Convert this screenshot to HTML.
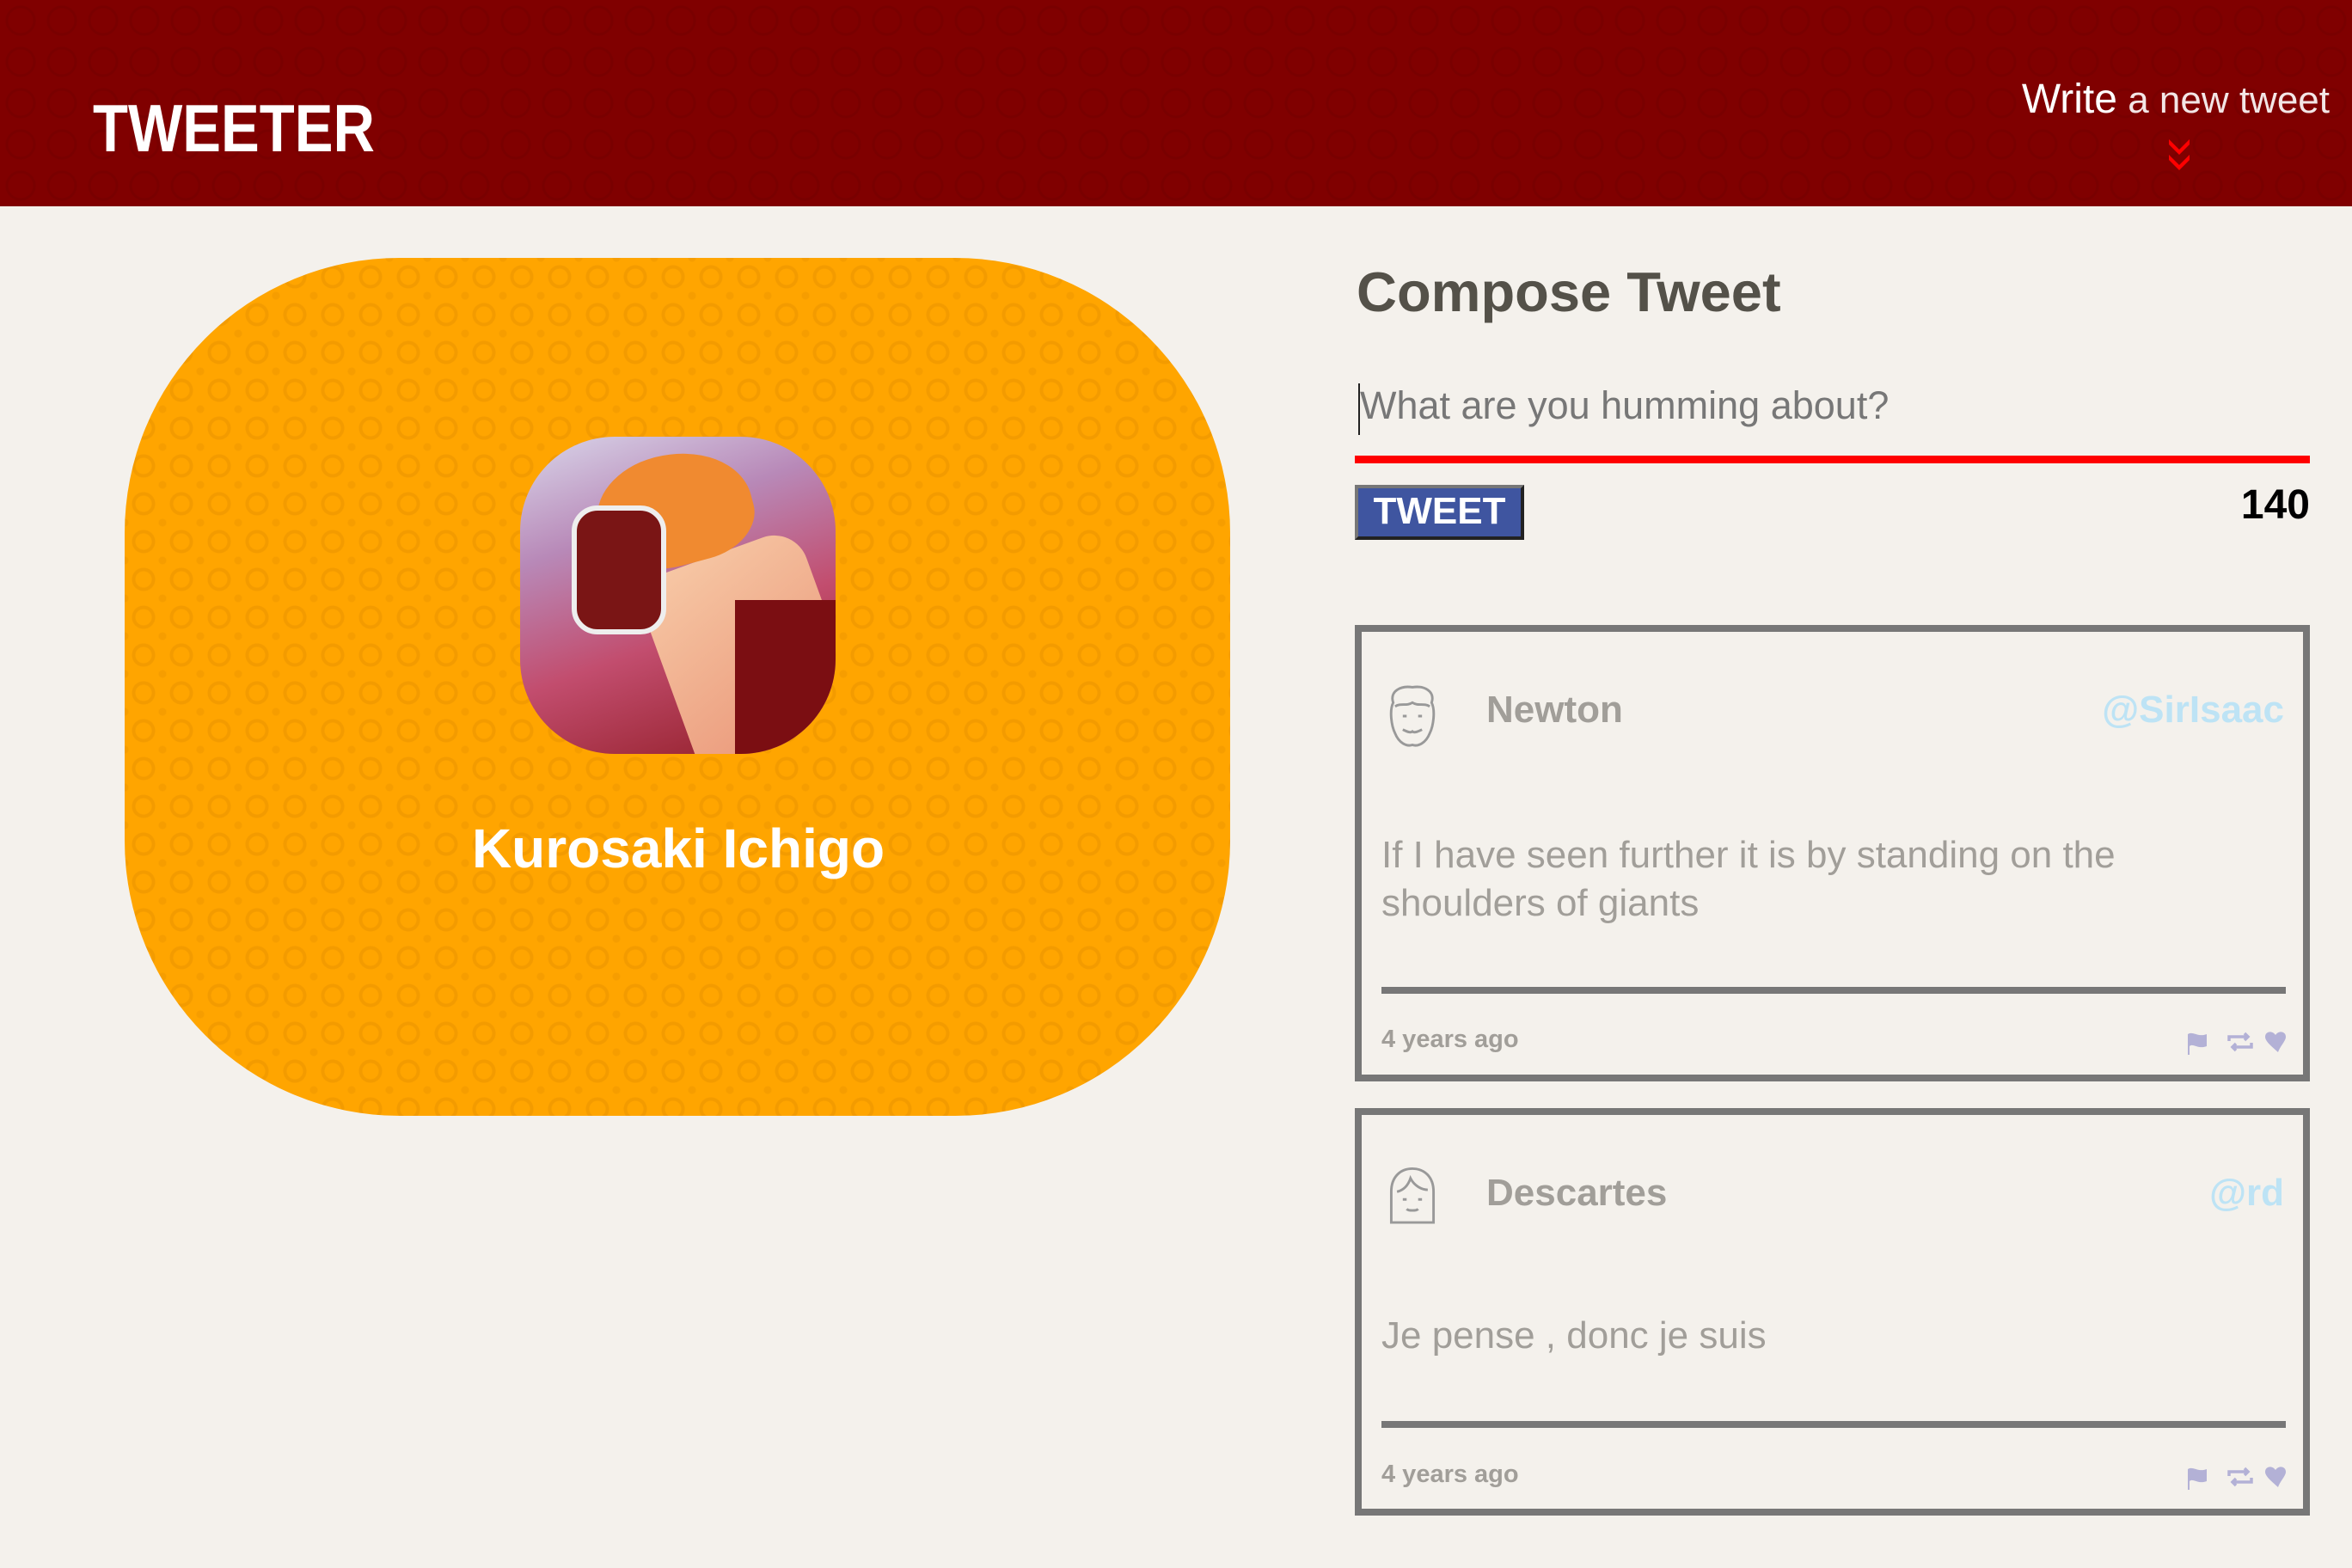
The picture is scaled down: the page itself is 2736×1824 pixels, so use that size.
<!DOCTYPE html>
<html><head><meta charset="utf-8"><style>
*{margin:0;padding:0;box-sizing:border-box}
body{width:2736px;height:1824px;background:#f4f1ec;font-family:"Liberation Sans",sans-serif;position:relative;overflow:hidden}
.abs{position:absolute;white-space:nowrap}
header{position:absolute;left:0;top:0;width:2736px;height:240px;background:#800000;
background-image:radial-gradient(circle at 50% 50%,rgba(0,0,0,0) 14px,rgba(100,0,0,.25) 15px,rgba(100,0,0,.25) 17px,rgba(0,0,0,0) 18px);background-size:48px 48px}
.card{position:absolute;left:145px;top:300px;width:1286px;height:998px;border-radius:320px;background:#ffa500;
background-image:radial-gradient(circle,rgba(0,0,0,0) 9px,rgba(225,140,0,.4) 10px,rgba(225,140,0,.4) 13px,rgba(0,0,0,0) 14px),radial-gradient(circle,rgba(225,140,0,.3) 4px,rgba(0,0,0,0) 5px);background-size:44px 44px,44px 44px;background-position:0 0,22px 22px}
.tw{position:absolute;left:1576px;width:1111px;border:8px solid #777;}
.ic{fill:#b3b1d6}
</style></head><body>
<header>
<div class="abs" style="left:108px;top:104px;font-size:78px;font-weight:900;color:#fff;transform:scaleX(0.86);transform-origin:left top">TWEETER</div>
<div class="abs" style="right:26px;top:88px;font-size:44px;color:#fff"><span style="font-size:48px">Write</span> <span style="color:#f3e6e6">a new tweet</span></div>
<svg class="abs" style="left:2520px;top:160px" width="30" height="40" viewBox="0 0 30 40"><path d="M3 2 L15 14 L27 2 L27 8 L15 20 L3 8Z M3 20 L15 32 L27 20 L27 26 L15 38 L3 26Z" fill="#f00"/></svg>
</header>
<div class="card"></div>
<div class="abs" style="left:605px;top:508px;width:367px;height:369px;border-radius:110px;overflow:hidden;background:linear-gradient(160deg,#d9d6ea 0%,#b889b8 30%,#c24d6e 60%,#8e1a22 100%)">
<div class="abs" style="left:170px;top:130px;width:200px;height:260px;background:linear-gradient(160deg,#f7c9a6,#e88f72);transform:rotate(-20deg);border-radius:40px"></div>
<div class="abs" style="left:90px;top:20px;width:180px;height:130px;background:#f08a30;border-radius:50% 60% 40% 50%;transform:rotate(-15deg)"></div>
<div class="abs" style="left:60px;top:80px;width:110px;height:150px;background:#7a1515;border-radius:30px;border:6px solid #eee"></div>
<div class="abs" style="left:250px;top:190px;width:130px;height:200px;background:#7b0e12"></div>
</div>
<div class="abs" style="left:545px;top:950px;width:488px;text-align:center;font-size:64px;font-weight:bold;color:#fff">Kurosaki Ichigo</div>

<div class="abs" style="left:1578px;top:302px;font-size:65px;font-weight:bold;color:#545149">Compose Tweet</div>
<div class="abs" style="left:1580px;top:446px;width:2px;height:60px;background:#222"></div>
<div class="abs" style="left:1582px;top:446px;font-size:45px;color:#777">What are you humming about?</div>
<div class="abs" style="left:1576px;top:530px;width:1111px;height:9px;background:#f00"></div>
<div class="abs" style="left:1576px;top:564px;width:197px;height:64px;background:#3f55a0;border-top:4px solid #777;border-left:4px solid #777;border-right:4px solid #222;border-bottom:4px solid #222;color:#fff;font-size:44px;font-weight:900;text-align:center;line-height:54px">TWEET</div>
<div class="abs" style="left:2560px;top:560px;width:127px;text-align:right;font-size:48px;font-weight:900;color:#000">140</div>

<div class="tw" style="top:727px;height:531px">
<svg class="abs" style="left:23px;top:60px" width="72" height="76" viewBox="0 0 32 34" fill="none" stroke="#999" stroke-width="1.3"><path d="M6 10 C4 4 10 1 16 2 C22 1 28 4 26 10 C28 14 27 22 25 26 C23 31 19 33 16 32 C13 33 9 31 7 26 C5 22 4 14 6 10Z"/><path d="M7 12 C10 10 13 12 16 10 C19 12 22 10 25 12"/><path d="M11 17h2M19 17h2M11 24c2 1 4 2 5 1c1 1 3 0 5-1"/></svg>
<div class="abs" style="left:145px;top:66px;font-size:44px;font-weight:bold;color:#a19e99">Newton</div>
<div class="abs" style="right:22px;top:66px;font-size:44px;font-weight:bold;color:#bde3f5">@SirIsaac</div>
<div class="abs" style="left:23px;top:232px;font-size:44px;line-height:56px;color:#a19e99;white-space:normal;width:960px">If I have seen further it is by standing on the shoulders of giants</div>
<div class="abs" style="left:23px;top:413px;width:1052px;height:8px;background:#777"></div>
<div class="abs" style="left:23px;top:458px;font-size:29px;font-weight:bold;color:#a19e99">4 years ago</div>
<svg class="abs" style="left:953px;top:462px" width="130" height="30" viewBox="0 0 130 30"><path class="ic" d="M8 6 C14 2 20 10 30 6 L30 20 C20 24 14 16 10 20 L10 30 L8 30Z"/><path d="M56 14 V9 H78 M74 5 L78 9 L74 13 M82 16 V21 H60 M64 17 L60 21 L64 25" fill="none" stroke="#b3b1d6" stroke-width="3.5"/><path class="ic" d="M113 27 C104 19 98 14 98 9 C98 3 106 1 110 7 C114 1 122 3 122 9 C122 14 116 19 113 27Z"/></svg>
</div>

<div class="tw" style="top:1289px;height:474px">
<svg class="abs" style="left:23px;top:58px" width="72" height="76" viewBox="0 0 32 34" fill="none" stroke="#999" stroke-width="1.3"><path d="M5 30 V14 C5 6 10 2 16 2 C22 2 27 6 27 14 V30 Z"/><path d="M8 14 C12 13 14 10 15 7 C17 11 21 13 24 13"/><path d="M11 18h2M19 18h2M13 23c1 1 5 1 6 0"/></svg>
<div class="abs" style="left:145px;top:66px;font-size:44px;font-weight:bold;color:#a19e99">Descartes</div>
<div class="abs" style="right:22px;top:66px;font-size:44px;font-weight:bold;color:#bde3f5">@rd</div>
<div class="abs" style="left:23px;top:232px;font-size:44px;color:#a19e99">Je pense , donc je suis</div>
<div class="abs" style="left:23px;top:356px;width:1052px;height:8px;background:#777"></div>
<div class="abs" style="left:23px;top:402px;font-size:29px;font-weight:bold;color:#a19e99">4 years ago</div>
<svg class="abs" style="left:953px;top:406px" width="130" height="30" viewBox="0 0 130 30"><path class="ic" d="M8 6 C14 2 20 10 30 6 L30 20 C20 24 14 16 10 20 L10 30 L8 30Z"/><path d="M56 14 V9 H78 M74 5 L78 9 L74 13 M82 16 V21 H60 M64 17 L60 21 L64 25" fill="none" stroke="#b3b1d6" stroke-width="3.5"/><path class="ic" d="M113 27 C104 19 98 14 98 9 C98 3 106 1 110 7 C114 1 122 3 122 9 C122 14 116 19 113 27Z"/></svg>
</div>
</body></html>
